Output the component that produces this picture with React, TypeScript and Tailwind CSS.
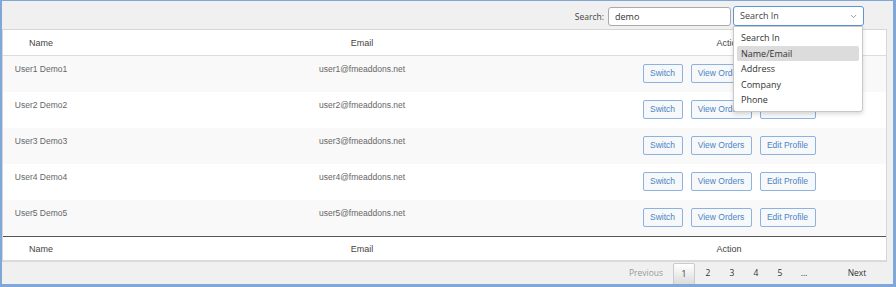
import { ChevronDown } from "lucide-react";

const users = [1, 2, 3, 4, 5].map((n) => ({
  name: `User${n} Demo${n}`,
  email: `user${n}@fmeaddons.net`,
}));

const options = ["Search In", "Name/Email", "Address", "Company", "Phone"];

const cols = "grid grid-cols-[76px_566px_168px_1fr]";

function HeadRow() {
  return (
    <div className={`${cols} h-full items-center text-[9px] leading-[12px] text-[#444]`}>
      <div className="text-center">Name</div>
      <div className="text-center">Email</div>
      <div className="text-center">Action</div>
      <div />
    </div>
  );
}

function ActionButton({ label, width }: { label: string; width: string }) {
  return (
    <button
      type="button"
      className={`${width} h-[19px] shrink-0 rounded-[2px] border border-[#8cb2e0] bg-[#f7f8fa] text-[8.5px] leading-none text-[#4a85c6]`}
    >
      {label}
    </button>
  );
}

export default function App() {
  return (
    <div className="w-[896px] h-[287px] overflow-hidden border-[#7fa7d8] border-t border-l-2 border-r-[3px] border-b-[3px] bg-[#f0f0f0] flex flex-col">
      {/* toolbar */}
      <div className="h-[28px] shrink-0 flex justify-end items-start pt-[5px] pr-[29px] font-['Open_Sans',sans-serif]">
        <span className="text-[8.5px] text-[#444] mt-[5px] mr-[4px]">Search:</span>
        <div className="mt-[1px] w-[123px] h-[19px] rounded-[3px] border border-[#aaa] bg-white pl-[6px] flex items-center text-[9px] text-[#333]">
          demo
        </div>
        <div className="relative ml-[2px] w-[131px] h-[20px]">
          <div className="h-full rounded-[3px] border border-[#5a93d8] bg-white pl-[6px] pr-[5px] flex items-center justify-between text-[9px] text-[#444]">
            <span>Search In</span>
            <ChevronDown size={9} strokeWidth={2} className="text-[#777]" />
          </div>
          <div className="absolute top-full left-0 z-10 w-[130px] rounded-b-[3px] border border-[#c8c8c8] bg-white px-[3px] py-[3px] shadow-[0_2px_4px_rgba(0,0,0,0.15)]">
            {options.map((o, i) => (
              <div
                key={o}
                className={`h-[15.5px] flex items-center pl-[4px] text-[9px] text-[#333] rounded-[2px] ${
                  i === 1 ? "bg-[#dcdcdc]" : ""
                }`}
              >
                {o}
              </div>
            ))}
          </div>
        </div>
      </div>

      {/* table */}
      <div className="w-[885px] shrink-0 border-l border-r border-t border-[#d6d6d6] bg-white font-['Liberation_Sans',Arial,sans-serif]">
        <div className="h-[26px] border-b border-[#dcdcdc]">
          <HeadRow />
        </div>
        {users.map((u, i) => (
          <div
            key={u.email}
            className={`${cols} h-[36px] text-[8.5px] text-[#666] ${i % 2 === 0 ? "bg-[#f9f9f9]" : "bg-white"}`}
          >
            <div className="text-center pt-[7px] leading-[12px]">{u.name}</div>
            <div className="text-center pt-[7px] leading-[12px]">{u.email}</div>
            <div className="flex justify-center gap-[8px] pt-[8px]">
              <ActionButton label="Switch" width="w-[40px]" />
              <ActionButton label="View Orders" width="w-[61px]" />
              <ActionButton label="Edit Profile" width="w-[56px]" />
            </div>
            <div />
          </div>
        ))}
        <div className="h-[26px] border-t border-[#555] border-b-2 border-b-[#dadada] pt-[1px]">
          <HeadRow />
        </div>
      </div>

      {/* pagination */}
      <div className="flex-1 min-h-0 flex justify-end items-start pt-[1px] pr-[13px] font-['Open_Sans',sans-serif] text-[8.5px] text-[#333]">
        <span className="w-[46px] h-[21px] flex items-center justify-center text-[#999]">Previous</span>
        <span className="ml-[4px] w-[22px] h-[22px] shrink-0 flex items-center justify-center rounded-[2px] border border-[#cacaca] bg-gradient-to-b from-white to-[#dcdcdc]">
          1
        </span>
        {["2", "3", "4", "5", "…"].map((p) => (
          <span key={p} className="ml-[2px] w-[22px] h-[21px] flex items-center justify-center">
            {p}
          </span>
        ))}
        <span className="ml-[19px] w-[46px] h-[21px] flex items-center justify-center">Next</span>
      </div>
    </div>
  );
}
